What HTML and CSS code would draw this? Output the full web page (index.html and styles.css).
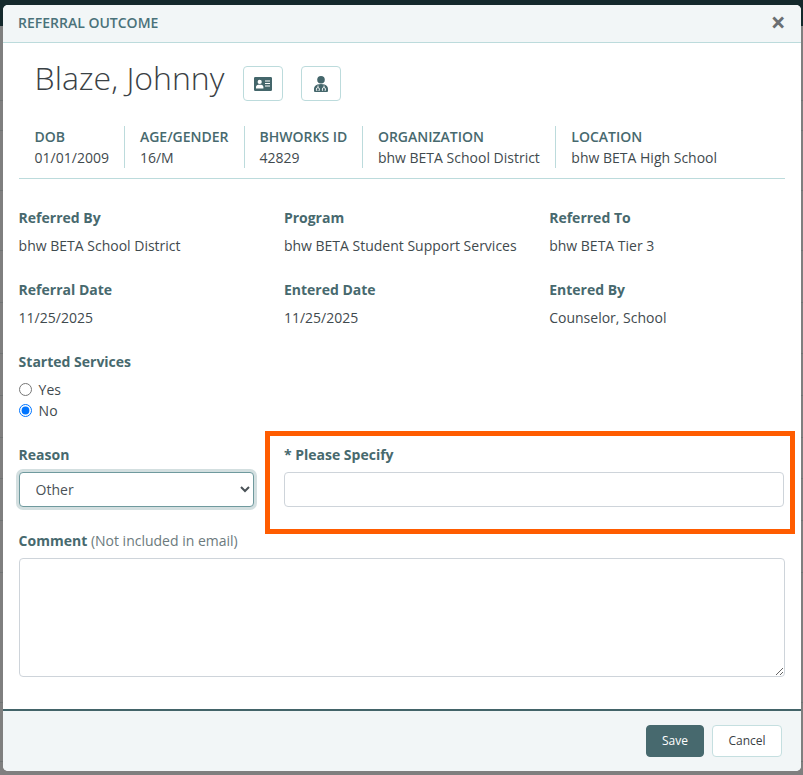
FILE: index.html
```html
<!DOCTYPE html>
<html lang="en">
<head>
<meta charset="utf-8">
<title>Referral Outcome</title>
<link rel="stylesheet" href="styles.css">
</head>
<body>
<div class="topbar"></div>
<div class="backdrop-lines"></div>
<div class="modal">
  <header class="modal-header">
    <h1>REFERRAL OUTCOME</h1>
    <span class="close">×</span>
  </header>
  <div class="modal-body">
    <div class="title-row">
      <h2>Blaze, Johnny</h2>
      <button class="icon-btn first" type="button" aria-label="Demographics">
        <svg width="18" height="14" viewBox="0 0 18 14"><path fill="#44666b" fill-rule="evenodd" d="M1.3 0h15.4A1.3 1.3 0 0 1 18 1.3v11.4a1.3 1.3 0 0 1-1.3 1.3H1.3A1.3 1.3 0 0 1 0 12.700V1.300A1.300 1.300 0 0 1 1.300 0zM5.700 2.800a2.100 2.100 0 1 0 0 4.200 2.100 2.100 0 0 0 0-4.200zM2 11.400h7.400V10.100c0-1.300-1-2.300-2.300-2.300H4.300C3 7.800 2 8.800 2 10.100zM11 3.600v1h5v-1zM11 6.100v1h5v-1zM11 8.600v1h5v-1z"/></svg>
      </button>
      <button class="icon-btn" type="button" aria-label="Providers">
        <svg width="14" height="16" viewBox="0 0 14 16"><circle cx="7" cy="3.800" r="3.800" fill="#44666b"/><path fill="#44666b" d="M3.500 8.400Q7 7.400 10.500 8.400C12.700 9 14 10.700 14 12.800V15a1 1 0 0 1-1 1H1a1 1 0 0 1-1-1v-2.200C0 10.700 1.300 9 3.500 8.400z"/><path fill="none" stroke="#fff" stroke-width=".9" d="M4 9.500v1.900M3.300 14.400H2.400v-1.300a1.500 1.500 0 0 1 3 0v1.300h-.9M10 9.500v1.700M9.100 14.400h-.7v-1.400a1.500 1.500 0 0 1 3 0v1.400h-.7"/></svg>
      </button>
    </div>
    <div class="demo">
      <div class="demo-item dob"><strong>DOB</strong><span>01/01/2009</span></div>
      <div class="demo-item age"><strong>AGE/GENDER</strong><span>16/M</span></div>
      <div class="demo-item bh"><strong>BHWORKS ID</strong><span>42829</span></div>
      <div class="demo-item org"><strong>ORGANIZATION</strong><span>bhw BETA School District</span></div>
      <div class="demo-item loc"><strong>LOCATION</strong><span>bhw BETA High School</span></div>
    </div>
    <div class="info-grid">
      <div><label>Referred By</label><p>bhw BETA School District</p></div>
      <div><label>Program</label><p>bhw BETA Student Support Services</p></div>
      <div><label>Referred To</label><p>bhw BETA Tier 3</p></div>
      <div><label>Referral Date</label><p>11/25/2025</p></div>
      <div><label>Entered Date</label><p>11/25/2025</p></div>
      <div><label>Entered By</label><p>Counselor, School</p></div>
    </div>
    <div class="services">
      <label>Started Services</label>
      <div class="radio"><input type="radio" name="started" id="yes"><span>Yes</span></div>
      <div class="radio"><input type="radio" name="started" id="no" checked><span>No</span></div>
    </div>
    <div class="reason-row">
      <div class="reason">
        <label>Reason</label>
        <select><option>Other</option></select>
      </div>
      <div class="specify">
        <label>* Please Specify</label>
        <input type="text">
        <div class="highlight"></div>
      </div>
    </div>
    <div class="comment">
      <label>Comment <em>(Not included in email)</em></label>
      <textarea></textarea>
    </div>
  </div>
  <footer class="modal-footer">
    <button class="btn save" type="button">Save</button>
    <button class="btn cancel" type="button">Cancel</button>
  </footer>
</div>
</body>
</html>
```
FILE: styles.css
```css
* { box-sizing: border-box; }
html, body { margin: 0; height: 775px; overflow: hidden; }
body {
  background: #7f7f7f;
  font-family: "Open Sans", sans-serif;
  font-size: 14px;
  line-height: 21px;
  color: #3f4a4e;
  padding: 5px 2px 4px 3px;
  position: relative;
}
.topbar { position: absolute; left: 0; top: 0; width: 100%; height: 26px; background: #14292c; }
.backdrop-lines {
  position: absolute; left: 0; top: 0; width: 100%; height: 775px;
  background-image:
    linear-gradient(#707474, #707474), linear-gradient(#707474, #707474), linear-gradient(#707474, #707474),
    linear-gradient(#707474, #707474), linear-gradient(#707474, #707474), linear-gradient(#707474, #707474),
    linear-gradient(#707474, #707474), linear-gradient(#707474, #707474), linear-gradient(#707474, #707474),
    linear-gradient(#707474, #707474), linear-gradient(#707474, #707474), linear-gradient(#707474, #707474),
    linear-gradient(#707474, #707474);
  background-repeat: no-repeat;
  background-size: 100% 1px;
  background-position:
    0 100px, 0 130px, 0 190px, 0 250px, 0 302px, 0 353px, 0 395px,
    0 437px, 0 478px, 0 520px, 0 572px, 0 702px, 0 761px;
}
.modal {
  position: relative;
  height: 766px;
  background: #fff;
  border-radius: 5px;
  display: flex;
  flex-direction: column;
  overflow: hidden;
}
.modal-header {
  height: 38px;
  background: #f2f6f7;
  border-bottom: 1px solid #bcdbdc;
  display: flex;
  align-items: center;
  justify-content: space-between;
  padding: 0 15.500px 2px 15px;
}
.modal-header h1 { margin: 0 0 1px; font-size: 14px; font-weight: 600; color: #4a727a; }
.close { font-size: 26px; font-weight: 700; color: #6a6f72; line-height: 21px; }
.modal-body { flex: 1; padding: 0 16px 0 15.6px; }
.title-row { display: flex; align-items: center; height: 77px; padding: 4px 0 0 16px; }
.title-row h2 { margin: 0 0 11px; font-size: 32px; font-weight: 300; line-height: 40px; color: #3a4145; width: 208px; white-space: nowrap; }
.icon-btn {
  width: 40px; height: 35px;
  margin-right: 18px;
  background: #fff;
  border: 1px solid #bcdbdc;
  border-radius: 4px;
  display: flex; align-items: center; justify-content: center;
  padding: 0;
}
.demo {
  display: flex;
  height: 53px;
  padding: 0 0 10px 0;
  border-bottom: 1px solid #bcdbdc;
  margin-top: 6px;
  width: 766px;
}
.demo-item { display: flex; flex-direction: column; padding: 0 15px; border-left: 1px solid #bcdbdc; height: 42px; }
.demo-item:first-child { border-left: 0; padding-left: 16px; }
.demo-item strong { font-weight: 600; color: #47696e; line-height: 21px; }
.demo-item span { line-height: 21px; white-space: nowrap; }
.demo-item.bh { padding-right: 14.6px; }
.demo-item.loc { padding-left: 15.5px; }
.info-grid { display: grid; grid-template-columns: repeat(3, 265.3px); margin-top: 28px; row-gap: 30px; }
.info-grid > div { height: 42px; }
label { display: block; font-weight: 700; color: #47696e; line-height: 21px; }
.info-grid p { margin: 7px 0 0; line-height: 21px; }
.services { margin-top: 30px; height: 72px; }
.radio { display: flex; align-items: center; height: 21px; gap: 7px; }
.services label { margin-bottom: 7px; }
.radio input { margin: 0; width: 13px; height: 13px; }
.reason-row { display: flex; margin-top: 21px; height: 86px; }
.reason { width: 265.33px; }
.reason select {
  display: block;
  width: 235px; height: 35px;
  margin-top: 7px;
  padding: 0 6px 0 12px;
  font: 14px "Open Sans", sans-serif;
  color: #4a5257;
  background: #fff;
  border: 1px solid #6f9a9e;
  border-radius: 4px;
  box-shadow: 0 0 0 3px #d3dfe0;
}
.specify { position: relative; flex: 1; }
.specify input {
  display: block;
  width: 500px; height: 35px;
  margin-top: 7px;
  border: 1px solid #ced4da;
  border-radius: 4px;
}
.highlight {
  position: absolute;
  left: -19px; top: -13px;
  width: 530px; height: 103px;
  border: 5px solid #ff5c00;
  pointer-events: none;
}
.comment em { font-style: normal; font-weight: 400; color: #6c7a7d; }
.comment textarea {
  display: block;
  width: 766px; height: 119px;
  margin-top: 7px;
  border: 1px solid #ced4da;
  border-radius: 4px;
}
.modal-footer {
  height: 62px;
  background: #f2f6f7;
  border-top: 2px solid #436469;
  display: flex;
  align-items: center;
  justify-content: flex-end;
  gap: 8px;
  padding: 0 19px 0 0;
}
.btn { height: 32px; border-radius: 4px; font: 12px "Open Sans", sans-serif; padding: 0 0 1px; }
.save { width: 58px; background: #47696e; border: 1px solid #47696e; color: #fff; }
.cancel { width: 70px; background: #fff; border: 1px solid #c5dfe0; color: #3a4145; }
```
